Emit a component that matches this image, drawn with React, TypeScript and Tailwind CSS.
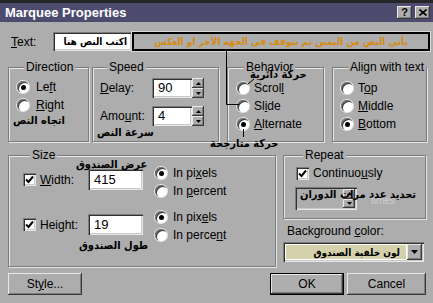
import React from 'react';

const raised =
  'bg-[#adadad] shadow-[inset_-1px_-1px_0_#3a3a3a,inset_1px_1px_0_#e8e8e8,inset_-2px_-2px_0_#7c7c7c]';
const sunken =
  'shadow-[inset_1px_1px_0_#7c7c7c,inset_2px_2px_0_#303030,inset_-1px_-1px_0_#e8e8e8,inset_-2px_-2px_0_#c8c8c8]';
const group =
  'border border-[#7c7c7c] shadow-[1px_1px_0_#e6e6e6,inset_1px_1px_0_#e6e6e6]';
const arabic = "font-['DejaVu_Sans_Condensed','DejaVu_Sans',sans-serif] font-bold";
const note = `absolute ${arabic} text-[11px] leading-[14px] whitespace-nowrap`;

function Radio({ on }: { on?: boolean }) {
  return (
    <span className="w-[12px] h-[12px] rounded-full bg-white shadow-[inset_1px_1px_0_#7c7c7c,inset_2px_2px_0_#404040,0_0_0_1px_#e6e6e6] flex items-center justify-center shrink-0">
      {on && <span className="w-[5px] h-[5px] rounded-full bg-black" />}
    </span>
  );
}

function Check() {
  return (
    <span className={`w-[13px] h-[13px] bg-white ${sunken} flex items-center justify-center shrink-0`}>
      <svg width="9" height="9" viewBox="0 0 9 9">
        <path d="M1 4.5 L3.5 7 L8 1.5" stroke="#000" strokeWidth="2" fill="none" />
      </svg>
    </span>
  );
}

function Spin() {
  return (
    <div className="flex flex-col w-[12px] h-full">
      <div className={`flex-1 ${raised} flex items-center justify-center`}>
        <svg width="5" height="3" viewBox="0 0 5 3">
          <path d="M0 3 L2.5 0 L5 3 Z" fill="#000" />
        </svg>
      </div>
      <div className={`flex-1 ${raised} flex items-center justify-center`}>
        <svg width="5" height="3" viewBox="0 0 5 3">
          <path d="M0 0 L2.5 3 L5 0 Z" fill="#000" />
        </svg>
      </div>
    </div>
  );
}

function Opt({ on, children, gap = 'gap-[7px]' }: { on?: boolean; children: React.ReactNode; gap?: string }) {
  return (
    <div className={`h-[18px] flex items-center ${gap} whitespace-nowrap`}>
      <Radio on={on} />
      <span>{children}</span>
    </div>
  );
}

function Legend({ children }: { children: React.ReactNode }) {
  return <legend className="ml-[7px] px-[2px] leading-[14px] bg-[#adadad] whitespace-nowrap">{children}</legend>;
}

export default function App() {
  return (
    <div className="relative w-[433px] h-[303px] overflow-hidden bg-[#adadad] text-[12px] text-black font-['Liberation_Sans',sans-serif]">
      {/* leftover toolbar strip */}
      <div className="h-[3px] bg-[#262626]" />

      {/* Title bar */}
      <div className="h-[19px] bg-[#4d4b6e] flex items-center justify-between pl-[5px] pr-[3px]">
        <span className="text-white font-bold text-[13px]">Marquee Properties</span>
        <div className="flex gap-[3px]">
          <div className={`w-[15px] h-[13px] ${raised} flex items-center justify-center font-bold text-[11px] leading-none`}>?</div>
          <div className={`w-[15px] h-[13px] ${raised} flex items-center justify-center`}>
            <svg width="8" height="7" viewBox="0 0 8 7">
              <path d="M0.5 0.5 L7.5 6.5 M7.5 0.5 L0.5 6.5" stroke="#000" strokeWidth="1.6" />
            </svg>
          </div>
        </div>
      </div>

      {/* Text row */}
      <div className="mt-[10px] h-[19px] flex items-center pl-[11px]">
        <span className="w-[42px]">
          <span className="underline">T</span>ext:
        </span>
        <div className={`w-[79px] h-[19px] bg-white ${sunken} flex items-center justify-end pr-[5px] overflow-hidden`}>
          <span dir="rtl" className={`${arabic} text-[10px] whitespace-nowrap`}>اكتب النص هنا</span>
        </div>
        <div className="w-[298px] h-[19px] border-2 border-black shadow-[0_0_0_1px_#d8d8d8] flex items-center justify-center overflow-hidden">
          <span dir="rtl" className={`${arabic} text-[10px] text-[#d68a12] whitespace-nowrap`}>
            يأتي النص من اليمين ثم يتوقف في الجهه الأخر او العكس
          </span>
        </div>
      </div>

      {/* Row 1 groups */}
      <div className="mt-[9px] flex">
        <fieldset className={`ml-[8px] w-[81px] h-[82px] ${group} pl-[8px]`}>
          <Legend>Direction</Legend>
          <div className="mt-[4px]">
            <Opt on>
              Le<span className="underline">f</span>t
            </Opt>
            <Opt>
              <span className="underline">R</span>ight
            </Opt>
          </div>
        </fieldset>

        <fieldset className={`ml-[3px] w-[127px] h-[82px] ${group} pl-[7px]`}>
          <Legend>Speed</Legend>
          <div className="mt-[4px] flex items-center h-[20px]">
            <span className="w-[52px]">
              <span className="underline">D</span>elay:
            </span>
            <div className={`w-[40px] h-[20px] bg-white ${sunken} flex items-center pl-[6px] text-[13px]`}>90</div>
            <Spin />
          </div>
          <div className="mt-[8px] flex items-center h-[20px]">
            <span className="w-[52px]">
              Amo<span className="underline">u</span>nt:
            </span>
            <div className={`w-[40px] h-[20px] bg-white ${sunken} flex items-center pl-[6px] text-[13px]`}>4</div>
            <Spin />
          </div>
        </fieldset>

        <fieldset className={`ml-[8px] w-[97px] h-[82px] ${group} pl-[9px]`}>
          <Legend>Behavior</Legend>
          <div className="mt-[5px]">
            <Opt gap="gap-[5px]">
              Scrol<span className="underline">l</span>
            </Opt>
            <Opt gap="gap-[5px]">
              Sl<span className="underline">i</span>de
            </Opt>
            <Opt on gap="gap-[5px]">
              <span className="underline">A</span>lternate
            </Opt>
          </div>
        </fieldset>

        <fieldset className={`ml-[8px] w-[94px] h-[82px] ${group} pl-[8px]`}>
          <Legend>Align with text</Legend>
          <div className="mt-[5px]">
            <Opt gap="gap-[5px]">
              T<span className="underline">o</span>p
            </Opt>
            <Opt gap="gap-[5px]">
              <span className="underline">M</span>iddle
            </Opt>
            <Opt on gap="gap-[5px]">
              <span className="underline">B</span>ottom
            </Opt>
          </div>
        </fieldset>
      </div>

      {/* Row 2 */}
      <div className="mt-[6px] flex">
        <fieldset className={`ml-[8px] w-[268px] h-[119px] ${group} pl-[14px]`}>
          <Legend>Size</Legend>
          <div className="mt-[2px] flex h-[36px]">
            <div className="mt-[5px] h-[21px] flex items-center">
              <Check />
              <span className="ml-[4px] w-[48px]">
                <span className="underline">W</span>idth:
              </span>
              <div className={`w-[55px] h-[21px] bg-white ${sunken} flex items-center pl-[6px] text-[13px]`}>415</div>
            </div>
            <div className="ml-[12px]">
              <Opt on gap="gap-[6px]">
                In pi<span className="underline">x</span>els
              </Opt>
              <Opt gap="gap-[6px]">
                In <span className="underline">p</span>ercent
              </Opt>
            </div>
          </div>
          <div className="mt-[8px] flex h-[37px]">
            <div className="mt-[6px] h-[21px] flex items-center">
              <Check />
              <span className="ml-[4px] w-[48px]">Height:</span>
              <div className={`w-[55px] h-[21px] bg-white ${sunken} flex items-center pl-[6px] text-[13px]`}>19</div>
            </div>
            <div className="ml-[12px]">
              <Opt on gap="gap-[6px]">
                In pix<span className="underline">e</span>ls
              </Opt>
              <Opt gap="gap-[6px]">
                In perce<span className="underline">n</span>t
              </Opt>
            </div>
          </div>
        </fieldset>

        <div className="ml-[7px] w-[143px]">
          <fieldset className={`h-[71px] ${group} pl-[12px]`}>
            <Legend>Repeat</Legend>
            <div className="mt-[2px] h-[18px] flex items-center">
              <Check />
              <span className="ml-[4px]">
                Continuo<span className="underline">u</span>sly
              </span>
            </div>
            <div className={`mt-[5px] -ml-[1px] w-[62px] h-[23px] ${sunken} flex justify-end p-[2px]`}>
              <Spin />
            </div>
          </fieldset>
          <div className="mt-[5px] ml-[4px] leading-[14px]">
            Background <span className="underline">c</span>olor:
          </div>
          <div className={`mt-[4px] h-[20px] w-[141px] ${sunken} flex p-[2px]`}>
            <div className="flex-1 border border-white bg-[#d5d1ac] flex items-center justify-end pr-[6px] overflow-hidden">
              <span dir="rtl" className={`${arabic} text-[10px] whitespace-nowrap`}>لون خلفية الصندوق</span>
            </div>
            <div className={`w-[15px] ${raised} flex items-center justify-center`}>
              <svg width="7" height="4" viewBox="0 0 7 4">
                <path d="M0 0 L3.5 4 L7 0 Z" fill="#000" />
              </svg>
            </div>
          </div>
        </div>
      </div>

      {/* Buttons */}
      <div className="mt-[6px] flex">
        <button className={`ml-[8px] w-[74px] h-[22px] ${raised}`}>
          St<span className="underline">y</span>le...
        </button>
        <button className={`ml-[188px] w-[74px] h-[22px] border border-black ${raised}`}>OK</button>
        <button className={`ml-[3px] w-[79px] h-[22px] ${raised}`}>Cancel</button>
      </div>

      {/* Arabic annotations laid over the dialog */}
      <span dir="rtl" className={`${note} left-[13px] top-[114px]`}>اتجاه النص</span>
      <span dir="rtl" className={`${note} left-[97px] top-[126px]`}>سرعة النص</span>
      <span dir="rtl" className={`${note} left-[250px] top-[68px]`}>حركة دائرية</span>
      <span dir="rtl" className={`${note} left-[210px] top-[137px]`}>حركة متارجحة</span>
      <span dir="rtl" className={`${note} left-[76px] top-[158px]`}>عرض الصندوق</span>
      <span dir="rtl" className={`${note} left-[79px] top-[239px]`}>طول الصندوق</span>
      <span className="absolute left-[371px] top-[195px] text-[10px] leading-[12px] text-[#cfcfcf]">times</span>
      <span dir="rtl" className={`${note} left-[300px] top-[188px]`}>تحديد عدد مرات الدوران</span>

      {/* pointer lines */}
      <svg className="absolute left-0 top-0 pointer-events-none" width="433" height="303">
        <path d="M226.5 51 V104.5 H239" stroke="#000" strokeWidth="1" fill="none" />
        <path d="M243.5 129 V137" stroke="#000" strokeWidth="1" fill="none" />
        <path d="M254 79 L248 84" stroke="#000" strokeWidth="1" fill="none" />
      </svg>
    </div>
  );
}
